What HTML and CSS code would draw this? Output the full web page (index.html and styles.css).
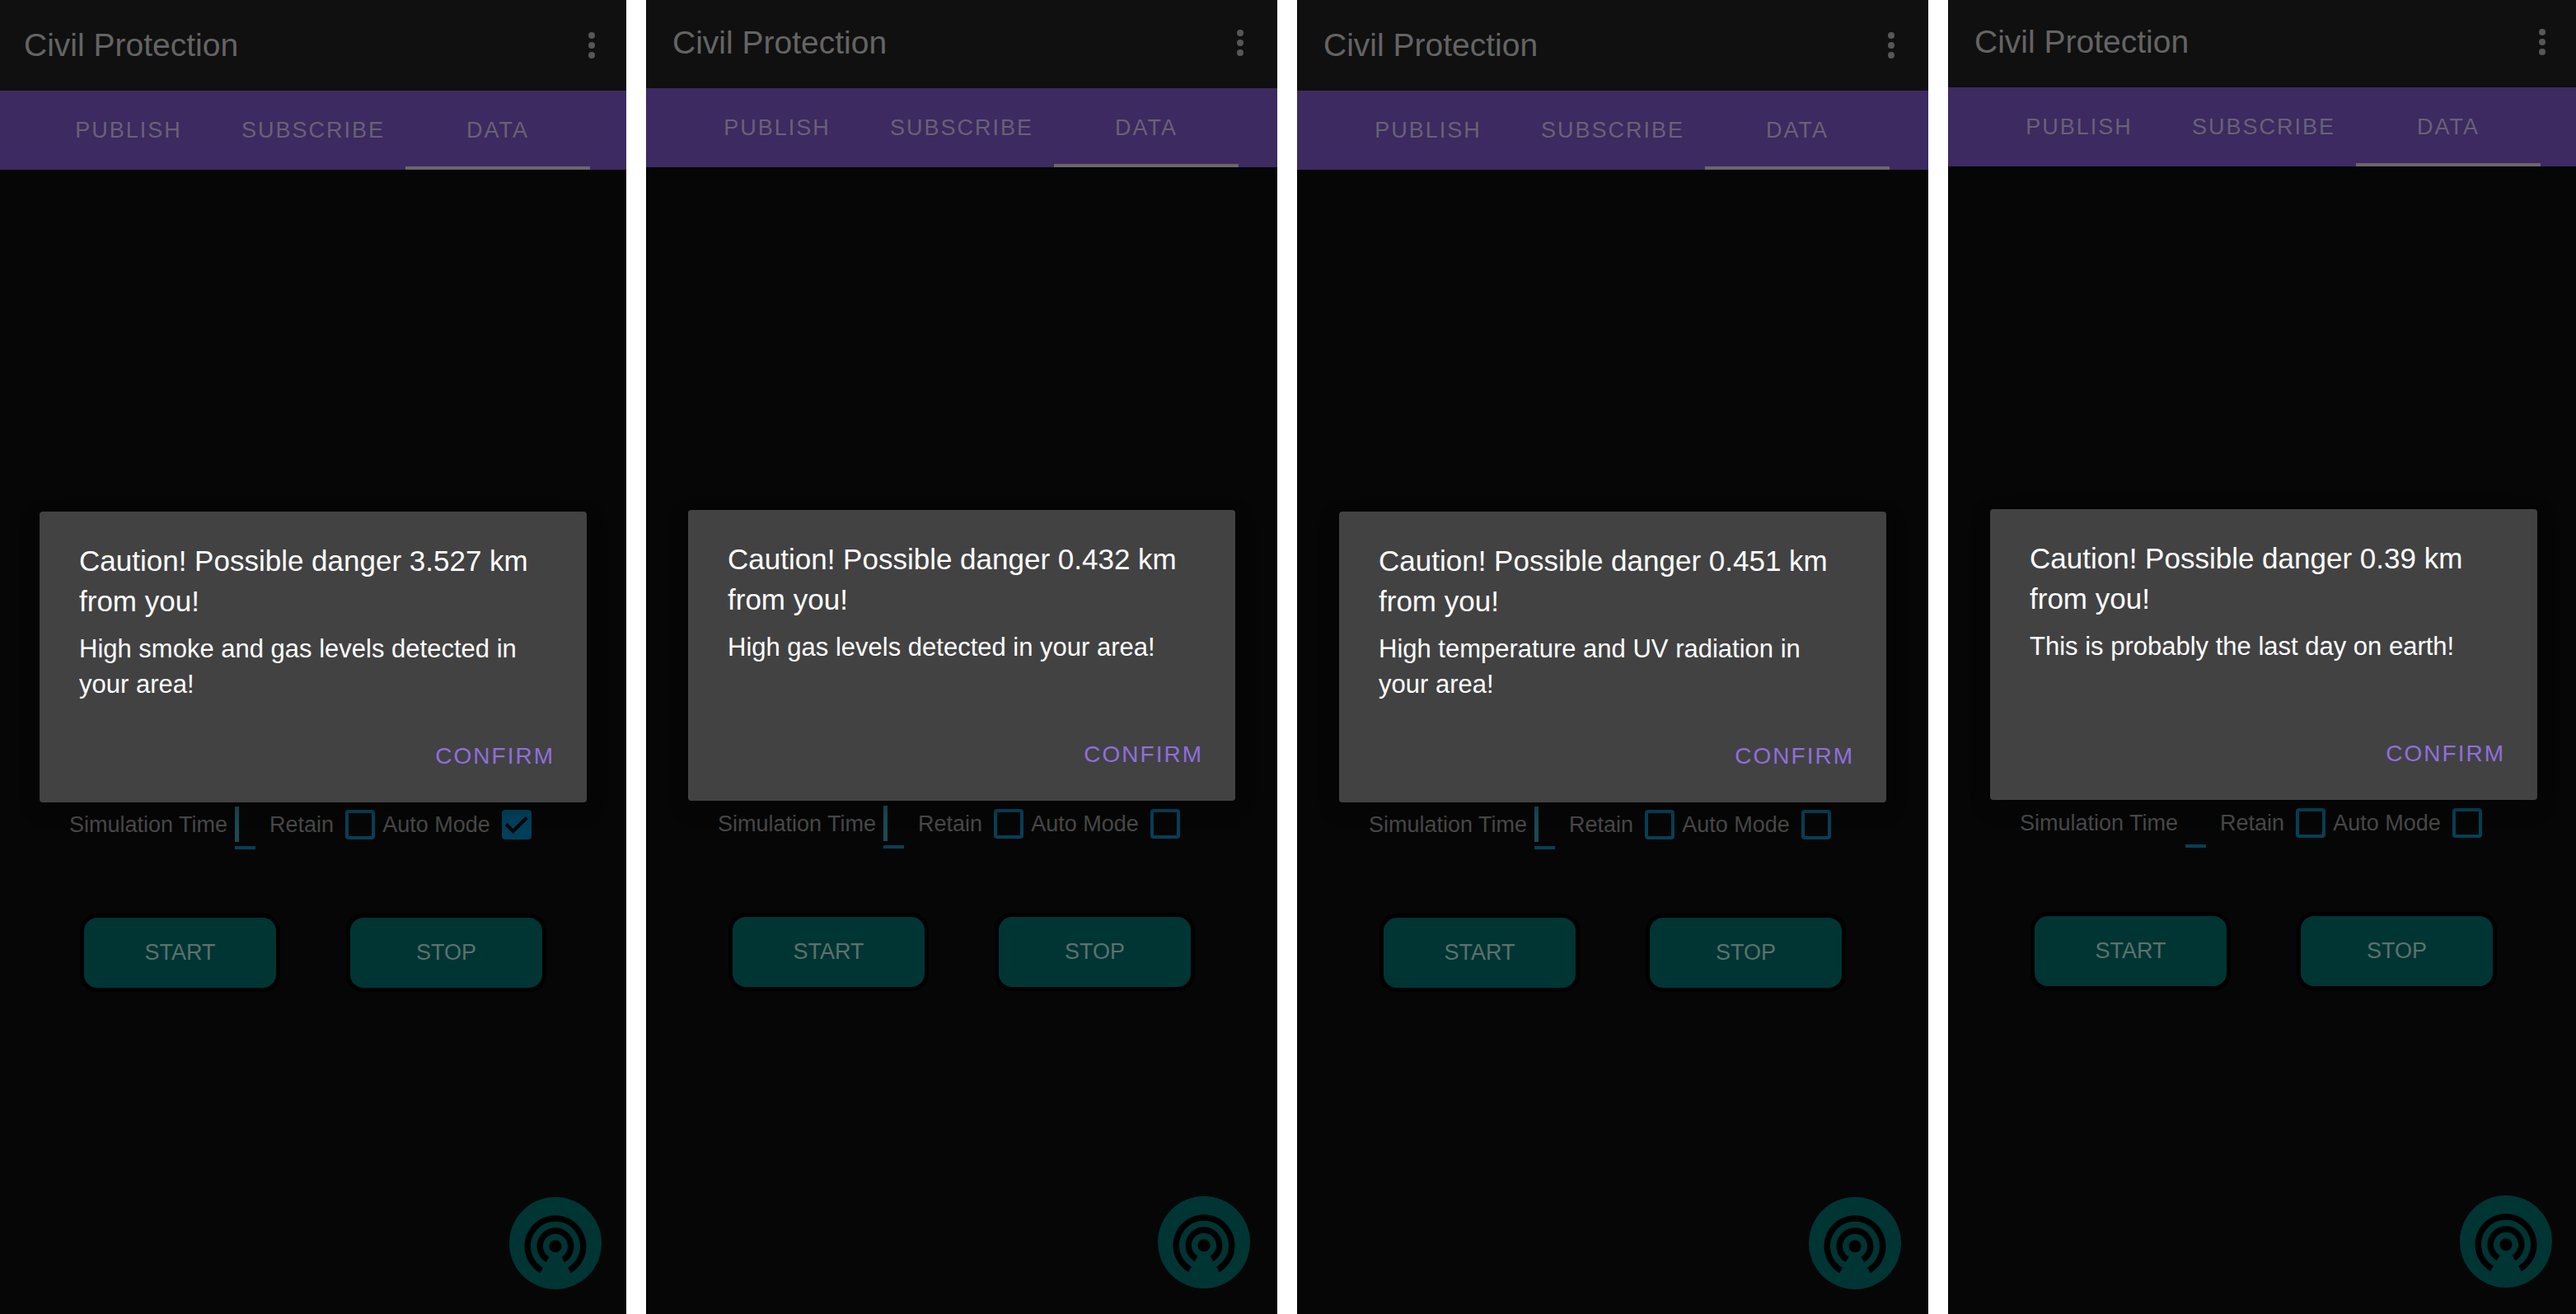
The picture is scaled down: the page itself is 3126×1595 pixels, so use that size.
FILE: index.html
```html
<!DOCTYPE html>
<html lang="en">
<head>
<meta charset="utf-8">
<meta name="viewport" content="width=device-width, initial-scale=1">
<title>Civil Protection</title>
<link rel="stylesheet" href="styles.css">
</head>
<body>
<svg class="sprite" aria-hidden="true">
  <symbol id="icon-more" viewBox="0 0 8 32">
    <circle cx="4" cy="4" r="4"/><circle cx="4" cy="16" r="4"/><circle cx="4" cy="28" r="4"/>
  </symbol>
  <symbol id="icon-tethering" viewBox="0 0 24 24">
    <path d="M12 11c-1.1 0-2 .9-2 2s.9 2 2 2 2-.9 2-2-.9-2-2-2zm6 2c0-3.31-2.69-6-6-6s-6 2.69-6 6c0 2.22 1.21 4.15 3 5.19l1-1.74c-1.19-.7-2-1.97-2-3.45 0-2.21 1.79-4 4-4s4 1.79 4 4c0 1.48-.81 2.75-2 3.45l1 1.74c1.79-1.04 3-2.97 3-5.19zM12 3C6.48 3 2 7.48 2 13c0 3.7 2.01 6.92 4.99 8.65l1-1.73C5.61 18.53 4 15.96 4 13c0-4.42 3.58-8 8-8s8 3.58 8 8c0 2.96-1.61 5.53-4 6.92l1 1.73c2.99-1.73 5-4.95 5-8.65 0-5.52-4.48-10-10-10z"/>
  </symbol>
</svg>
<main class="gallery">

  <section class="phone phone--trim-sides">
    <div class="screen">
      <header class="appbar">
        <h1 class="appbar__title">Civil Protection</h1>
        <button class="appbar__more" type="button" aria-label="More options"><svg><use href="#icon-more"/></svg></button>
      </header>
      <nav class="tabs">
        <a class="tab" href="#publish">PUBLISH</a>
        <a class="tab" href="#subscribe">SUBSCRIBE</a>
        <a class="tab tab--active" href="#data">DATA</a>
      </nav>
      <div class="content">
        <div class="options">
          <label for="time-1">Simulation Time</label>
          <input class="time time--focused" id="time-1" type="text">
          <label for="retain-1">Retain</label>
          <input class="check" id="retain-1" type="checkbox">
          <label for="auto-1">Auto Mode</label>
          <input class="check" id="auto-1" type="checkbox" checked>
        </div>
        <div class="actions">
          <button class="action" type="button">START</button>
          <button class="action" type="button">STOP</button>
        </div>
      </div>
      <button class="fab" type="button" aria-label="Broadcast"><svg><use href="#icon-tethering"/></svg></button>
      <div class="overlay">
        <div class="dialog" role="alertdialog" aria-labelledby="title-1" aria-describedby="text-1">
          <h2 class="dialog__title" id="title-1">Caution! Possible danger 3.527 km from you!</h2>
          <p class="dialog__text" id="text-1">High smoke and gas levels detected in your area!</p>
          <div class="dialog__footer"><button class="dialog__confirm" type="button">CONFIRM</button></div>
        </div>
      </div>
    </div>
  </section>

  <section class="phone phone--trim-top">
    <div class="screen">
      <header class="appbar">
        <h1 class="appbar__title">Civil Protection</h1>
        <button class="appbar__more" type="button" aria-label="More options"><svg><use href="#icon-more"/></svg></button>
      </header>
      <nav class="tabs">
        <a class="tab" href="#publish">PUBLISH</a>
        <a class="tab" href="#subscribe">SUBSCRIBE</a>
        <a class="tab tab--active" href="#data">DATA</a>
      </nav>
      <div class="content">
        <div class="options">
          <label for="time-2">Simulation Time</label>
          <input class="time time--focused" id="time-2" type="text">
          <label for="retain-2">Retain</label>
          <input class="check" id="retain-2" type="checkbox">
          <label for="auto-2">Auto Mode</label>
          <input class="check" id="auto-2" type="checkbox">
        </div>
        <div class="actions">
          <button class="action" type="button">START</button>
          <button class="action" type="button">STOP</button>
        </div>
      </div>
      <button class="fab" type="button" aria-label="Broadcast"><svg><use href="#icon-tethering"/></svg></button>
      <div class="overlay">
        <div class="dialog" role="alertdialog" aria-labelledby="title-2" aria-describedby="text-2">
          <h2 class="dialog__title" id="title-2">Caution! Possible danger 0.432 km from you!</h2>
          <p class="dialog__text" id="text-2">High gas levels detected in your area!</p>
          <div class="dialog__footer"><button class="dialog__confirm" type="button">CONFIRM</button></div>
        </div>
      </div>
    </div>
  </section>

  <section class="phone">
    <div class="screen">
      <header class="appbar">
        <h1 class="appbar__title">Civil Protection</h1>
        <button class="appbar__more" type="button" aria-label="More options"><svg><use href="#icon-more"/></svg></button>
      </header>
      <nav class="tabs">
        <a class="tab" href="#publish">PUBLISH</a>
        <a class="tab" href="#subscribe">SUBSCRIBE</a>
        <a class="tab tab--active" href="#data">DATA</a>
      </nav>
      <div class="content">
        <div class="options">
          <label for="time-3">Simulation Time</label>
          <input class="time time--focused" id="time-3" type="text">
          <label for="retain-3">Retain</label>
          <input class="check" id="retain-3" type="checkbox">
          <label for="auto-3">Auto Mode</label>
          <input class="check" id="auto-3" type="checkbox">
        </div>
        <div class="actions">
          <button class="action" type="button">START</button>
          <button class="action" type="button">STOP</button>
        </div>
      </div>
      <button class="fab" type="button" aria-label="Broadcast"><svg><use href="#icon-tethering"/></svg></button>
      <div class="overlay">
        <div class="dialog" role="alertdialog" aria-labelledby="title-3" aria-describedby="text-3">
          <h2 class="dialog__title" id="title-3">Caution! Possible danger 0.451 km from you!</h2>
          <p class="dialog__text" id="text-3">High temperature and UV radiation in your area!</p>
          <div class="dialog__footer"><button class="dialog__confirm" type="button">CONFIRM</button></div>
        </div>
      </div>
    </div>
  </section>

  <section class="phone phone--trim-corner">
    <div class="screen">
      <header class="appbar">
        <h1 class="appbar__title">Civil Protection</h1>
        <button class="appbar__more" type="button" aria-label="More options"><svg><use href="#icon-more"/></svg></button>
      </header>
      <nav class="tabs">
        <a class="tab" href="#publish">PUBLISH</a>
        <a class="tab" href="#subscribe">SUBSCRIBE</a>
        <a class="tab tab--active" href="#data">DATA</a>
      </nav>
      <div class="content">
        <div class="options">
          <label for="time-4">Simulation Time</label>
          <input class="time" id="time-4" type="text">
          <label for="retain-4">Retain</label>
          <input class="check" id="retain-4" type="checkbox">
          <label for="auto-4">Auto Mode</label>
          <input class="check" id="auto-4" type="checkbox">
        </div>
        <div class="actions">
          <button class="action" type="button">START</button>
          <button class="action" type="button">STOP</button>
        </div>
      </div>
      <button class="fab" type="button" aria-label="Broadcast"><svg><use href="#icon-tethering"/></svg></button>
      <div class="overlay">
        <div class="dialog" role="alertdialog" aria-labelledby="title-4" aria-describedby="text-4">
          <h2 class="dialog__title" id="title-4">Caution! Possible danger 0.39 km from you!</h2>
          <p class="dialog__text" id="text-4">This is probably the last day on earth!</p>
          <div class="dialog__footer"><button class="dialog__confirm" type="button">CONFIRM</button></div>
        </div>
      </div>
    </div>
  </section>

</main>
</body>
</html>
```

FILE: styles.css
```css
* {
  box-sizing: border-box;
}

body {
  margin: 0;
  background: #fff;
  font-family: "Liberation Sans", Arial, sans-serif;
}

button,
input {
  margin: 0;
  padding: 0;
  border: 0;
  background: none;
  font: inherit;
  color: inherit;
}

.sprite {
  position: absolute;
  width: 0;
  height: 0;
}

.gallery {
  display: grid;
  grid-template-columns: 760fr 766fr 766fr 762fr;
  gap: 24px;
  min-height: 100vh;
}

.phone {
  display: flex;
  flex-direction: column;
  overflow: hidden;
  background: #060606;
}

.screen {
  position: relative;
  display: flex;
  flex: 1;
  flex-direction: column;
}

/* Screens whose edges run slightly past the visible frame */
.phone--trim-sides .screen {
  margin-inline: -3px;
}

.phone--trim-top {
  padding-bottom: 1px;
}

.phone--trim-top .screen {
  margin-top: -3px;
}

.phone--trim-corner {
  padding-bottom: 2px;
}

.phone--trim-corner .screen {
  margin-top: -4px;
  margin-right: -4px;
}

.appbar {
  display: flex;
  align-items: center;
  justify-content: space-between;
  height: 110px;
  padding: 0 41px 0 32px;
  background: #101010;
}

.appbar__title {
  margin: 0;
  font-size: 39px;
  font-weight: 400;
  line-height: 48px;
  color: #646464;
}

.appbar__more,
.appbar__more svg {
  display: block;
  width: 8px;
  height: 32px;
  fill: #575757;
}

.tabs {
  display: grid;
  grid-template-columns: repeat(3, 1fr);
  height: 96px;
  padding: 0 47px;
  background: #3c2a61;
}

.tab {
  display: flex;
  align-items: center;
  justify-content: center;
  padding-top: 4px;
  border-bottom: 4px solid transparent;
  font-size: 27px;
  letter-spacing: 2px;
  text-decoration: none;
  color: #6a6173;
}

.tab--active {
  border-bottom-color: #6c666c;
}

.content {
  display: flex;
  flex: 1;
  flex-direction: column;
  justify-content: flex-end;
  gap: 83px;
  padding-bottom: 396px;
}

.options {
  display: flex;
  align-items: center;
  padding-left: 87px;
  font-size: 27px;
  white-space: nowrap;
  color: #484848;
}

.time {
  width: 25px;
  height: 52px;
  margin: 8px 17px 0 9px;
  border-bottom: 4px solid #083f55;
}

.time--focused {
  background: linear-gradient(#1b4a54, #1b4a54) no-repeat 0 0 / 5px 43px;
}

.check {
  width: 36px;
  height: 36px;
  margin: 0 9px 0 14px;
  border: 4px solid #083f55;
  border-radius: 4px;
  appearance: none;
}

.check:checked {
  border-color: #003f5a;
  background: #003f5a;
}

.check:checked::before {
  content: "";
  display: block;
  width: 28px;
  height: 28px;
  background: #060606;
  clip-path: polygon(0 15px, 3px 12px, 10px 19px, 25px 4px, 28px 7px, 10px 25px);
}

.actions {
  display: flex;
  justify-content: space-between;
  padding: 0 105px;
}

.action {
  width: 233px;
  height: 85px;
  border-radius: 16px;
  background: #003534;
  box-shadow: 0 0 0 5px #000;
  font-size: 27px;
  color: #5d716d;
}

.fab {
  position: absolute;
  right: 33px;
  bottom: 30px;
  display: grid;
  place-items: center;
  width: 112px;
  height: 112px;
  border-radius: 50%;
  background: #003534;
}

.fab svg {
  width: 90px;
  height: 90px;
  fill: #000;
}

.overlay {
  position: absolute;
  inset: 0;
  display: flex;
  align-items: center;
  padding: 0 51px;
}

.dialog {
  flex: 1;
  padding: 35px 39px 8px 48px;
  border-radius: 4px;
  background: #424242;
  box-shadow: 0 8px 24px rgb(0 0 0 / 25%);
  color: #fff;
}

.dialog__title {
  margin: 0 0 12px;
  font-size: 35px;
  font-weight: 400;
  line-height: 49px;
}

.dialog__text {
  min-height: 86px;
  margin: 0 0 18px;
  font-size: 31px;
  line-height: 43px;
}

.dialog__footer {
  display: flex;
  justify-content: flex-end;
}

.dialog__confirm {
  height: 96px;
  font-size: 28px;
  letter-spacing: 2px;
  color: #8f6fdc;
}
```
